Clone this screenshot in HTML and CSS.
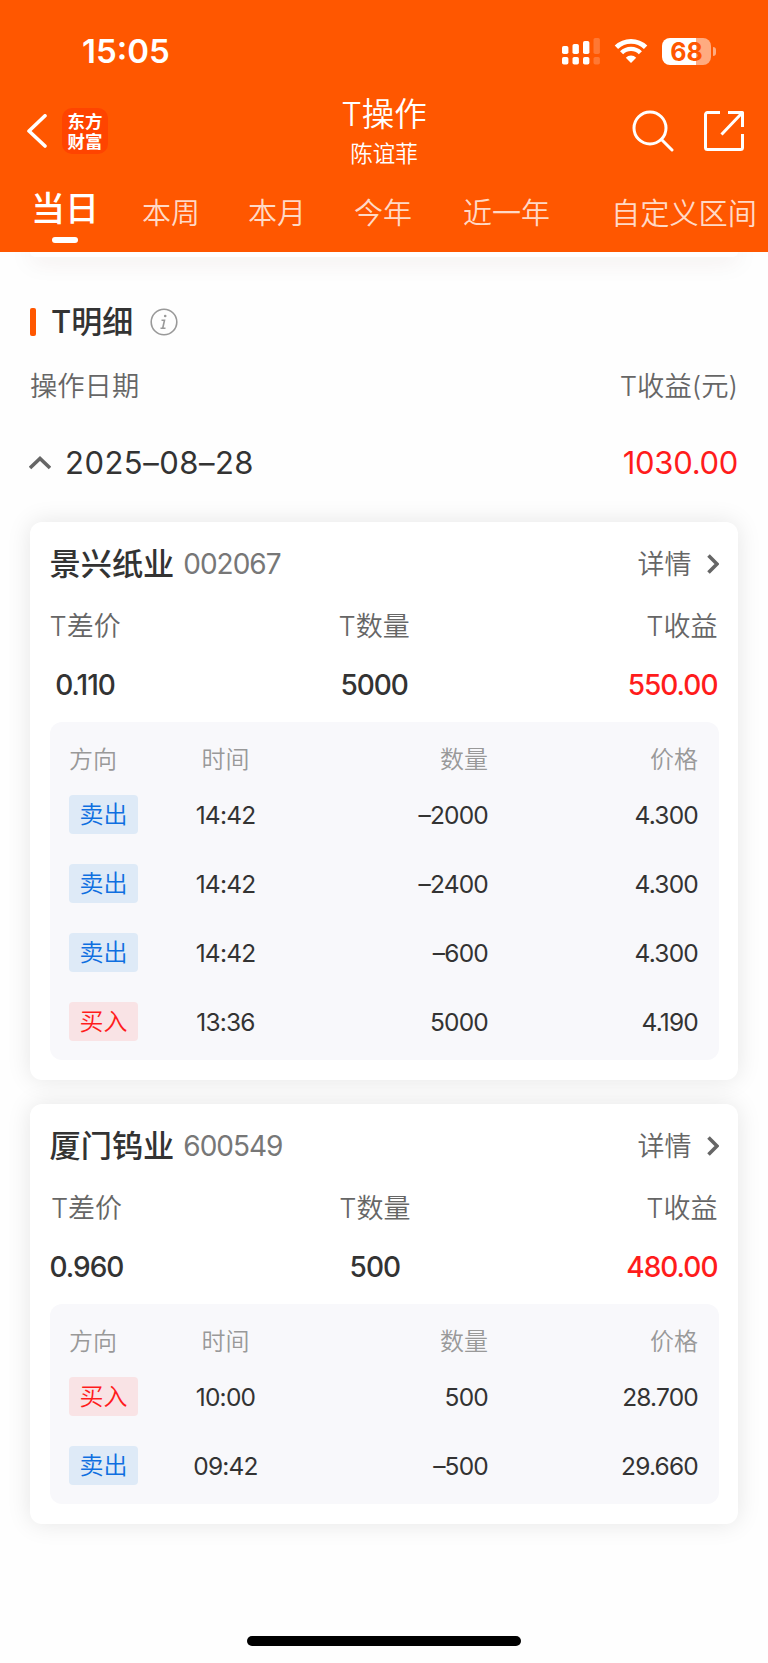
FILE: index.html
```html
<!DOCTYPE html>
<html lang="zh-CN">
<head>
  <meta charset="UTF-8">
  <meta name="viewport" content="width=device-width, initial-scale=1.0">
  <title>T操作</title>
  <link rel="stylesheet" href="styles.css">
</head>
<body>
  <header class="header">
    <div class="status-bar">
      <span class="time">15:05</span>
      <div class="status-icons">
        <svg class="signal" width="40" height="28" viewBox="0 0 40 28" fill="#fff">
          <rect x="1" y="9" width="6.4" height="8" rx="1.8"/>
          <rect x="11.5" y="7" width="6.4" height="10" rx="1.8"/>
          <rect x="22" y="4" width="6.4" height="13" rx="1.8"/>
          <rect x="32.5" y="1" width="6.4" height="16" rx="1.8" opacity=".2"/>
          <rect x="1" y="20" width="6.4" height="7.6" rx="1.8"/>
          <rect x="11.5" y="20" width="6.4" height="7.6" rx="1.8"/>
          <rect x="22" y="20" width="6.4" height="7.6" rx="1.8"/>
          <rect x="32.5" y="20" width="6.4" height="7.6" rx="1.8" opacity=".2"/>
        </svg>
        <svg class="wifi" width="34" height="26" viewBox="0 0 34 26">
          <path d="M2.4 9.2a21 21 0 0 1 29.2 0" fill="none" stroke="#fff" stroke-width="4.8"/>
          <path d="M7.6 14.8a13.2 13.2 0 0 1 18.8 0" fill="none" stroke="#fff" stroke-width="4.4"/>
          <path d="M17 25l-5.2-5.3a7.4 7.4 0 0 1 10.4 0z" fill="#fff"/>
        </svg>
        <div class="battery">68</div>
        <div class="battery-cap"></div>
      </div>
    </div>

    <div class="nav-bar">
      <div class="nav-left">
        <svg width="20" height="34" viewBox="0 0 20 34" fill="none" stroke="#fff" stroke-width="3.6" stroke-linecap="round" stroke-linejoin="round">
          <path d="M18 1.8L2 17l16 15"/>
        </svg>
        <div class="logo"><span>东方</span><span>财富</span></div>
      </div>
      <div class="nav-title">
        <h1>T操作</h1>
        <p>陈谊菲</p>
      </div>
      <div class="nav-right">
        <svg width="42" height="42" viewBox="0 0 42 42" fill="none" stroke="#fff" stroke-width="3" stroke-linecap="round">
          <circle cx="18" cy="18" r="16"/>
          <path d="M29.5 29.5L40 40"/>
        </svg>
        <svg width="42" height="42" viewBox="0 0 42 42" fill="none" stroke="#fff" stroke-width="3" stroke-linejoin="round">
          <path d="M17 2.5H4.5a2 2 0 0 0-2 2v33a2 2 0 0 0 2 2h33a2 2 0 0 0 2-2V24"/>
          <path d="M25 2.5h14.5V17M38.5 3.5l-20 21"/>
        </svg>
      </div>
    </div>

    <nav class="tabs">
      <a class="tab active">当日</a>
      <a class="tab">本周</a>
      <a class="tab">本月</a>
      <a class="tab">今年</a>
      <a class="tab year">近一年</a>
      <a class="tab custom">自定义区间</a>
    </nav>
  </header>

  <main>
    <div class="prev-card"></div>

    <div class="section-title">
      <h2>T明细</h2>
      <svg width="28" height="28" viewBox="0 0 28 28" fill="none" stroke="#999" stroke-width="1.6">
        <circle cx="14" cy="14" r="12.8"/>
        <path d="M11.5 12.3h3l-1.800 8M10.5 20.300h5"/>
        <circle cx="15.200" cy="8" r="1.3" fill="#999" stroke="none"/>
      </svg>
    </div>

    <div class="list-head">
      <span>操作日期</span>
      <span>T收益(元)</span>
    </div>

    <div class="date-row">
      <svg width="22" height="14" viewBox="0 0 22 14" fill="none" stroke="#666" stroke-width="3.6">
        <path d="M1 12L11 2.500 21 12"/>
      </svg>
      <span class="date">2025–08–28</span>
      <span class="total">1030.00</span>
    </div>

    <section class="card">
      <div class="card-head">
        <h3>景兴纸业</h3>
        <span class="code">002067</span>
        <a class="detail"><span>详情</span>
          <svg width="12" height="20" viewBox="0 0 12 20" fill="none" stroke="#666" stroke-width="3.6">
            <path d="M1.5 1.5L10 10l-8.5 8.5"/>
          </svg>
        </a>
      </div>
      <div class="stats">
        <div class="stat"><label>T差价</label><b>0.110</b></div>
        <div class="stat"><label>T数量</label><b>5000</b></div>
        <div class="stat"><label>T收益</label><b class="red">550.00</b></div>
      </div>
      <div class="trades">
        <div class="trades-head"><span>方向</span><span>时间</span><span>数量</span><span>价格</span></div>
        <div class="trade"><span class="tag sell">卖出</span><span>14:42</span><span>–2000</span><span>4.300</span></div>
        <div class="trade"><span class="tag sell">卖出</span><span>14:42</span><span>–2400</span><span>4.300</span></div>
        <div class="trade"><span class="tag sell">卖出</span><span>14:42</span><span>–600</span><span>4.300</span></div>
        <div class="trade"><span class="tag buy">买入</span><span>13:36</span><span>5000</span><span>4.190</span></div>
      </div>
    </section>

    <section class="card">
      <div class="card-head">
        <h3>厦门钨业</h3>
        <span class="code">600549</span>
        <a class="detail"><span>详情</span>
          <svg width="12" height="20" viewBox="0 0 12 20" fill="none" stroke="#666" stroke-width="3.6">
            <path d="M1.5 1.5L10 10l-8.5 8.5"/>
          </svg>
        </a>
      </div>
      <div class="stats">
        <div class="stat"><label>T差价</label><b>0.960</b></div>
        <div class="stat"><label>T数量</label><b>500</b></div>
        <div class="stat"><label>T收益</label><b class="red">480.00</b></div>
      </div>
      <div class="trades">
        <div class="trades-head"><span>方向</span><span>时间</span><span>数量</span><span>价格</span></div>
        <div class="trade"><span class="tag buy">买入</span><span>10:00</span><span>500</span><span>28.700</span></div>
        <div class="trade"><span class="tag sell">卖出</span><span>09:42</span><span>–500</span><span>29.660</span></div>
      </div>
    </section>
  </main>

  <div class="home-indicator"></div>
</body>
</html>
```
FILE: styles.css
```css
* {
  box-sizing: border-box;
  margin: 0;
  padding: 0;
}
body {
  width: 768px;
  height: 1663px;
  display: flex;
  flex-direction: column;
  overflow: hidden;
  font-family: Inter, "Noto Sans CJK SC", sans-serif;
  background: #fefefe;
  color: #333;
}
svg {
  display: block;
  flex-shrink: 0;
}

/* header */
.header {
  height: 252px;
  background: #ff5700;
  color: #fff;
  position: relative;
  z-index: 1;
}
.status-bar {
  height: 94px;
  padding: 8px 56px 0 82px;
  display: flex;
  justify-content: space-between;
  align-items: center;
}
.time {
  font-size: 33px;
  font-weight: 600;
}
.status-icons {
  display: flex;
  align-items: center;
}
.wifi {
  margin: 0 14px 0 13px;
}
.battery {
  width: 49px;
  height: 27px;
  border-radius: 8px;
  background: linear-gradient(90deg, #fff 69%, #ffab80 69%);
  color: #ff5700;
  font-size: 25px;
  font-weight: 700;
  line-height: 28px;
  text-align: center;
}
.battery-cap {
  width: 3px;
  height: 9px;
  margin: 0 -4px 0 2px;
  border-radius: 0 3px 3px 0;
  background: #ffab80;
}
.nav-bar {
  height: 80px;
  padding: 0 24px;
  display: grid;
  grid-template-columns: 1fr auto 1fr;
}
.nav-left, .nav-right {
  display: flex;
  align-items: center;
  padding-bottom: 7px;
}
.nav-left {
  padding-left: 3px;
}
.nav-right {
  justify-content: flex-end;
  gap: 29px;
  margin-right: -1px;
}
.logo {
  width: 46px;
  height: 46px;
  margin-left: 15px;
  display: flex;
  flex-direction: column;
  align-items: center;
  justify-content: center;
  border-radius: 10px;
  background: #ff4400;
  font-family: "Noto Sans CJK SC", sans-serif;
  font-size: 17.5px;
  font-weight: 700;
  line-height: 19.5px;
}
.nav-title {
  text-align: center;
}
.nav-title h1 {
  font-size: 32.5px;
  font-weight: 350;
  line-height: 41px;
}
.nav-title p {
  font-size: 22.5px;
  font-weight: 350;
  line-height: 37px;
}
.tabs {
  height: 78px;
  padding-left: 31px;
  display: flex;
  white-space: nowrap;
}
.tab {
  margin-right: 48px;
  font-size: 29px;
  font-weight: 350;
  line-height: 80px;
  color: #ffd9c6;
}
.tab.year {
  margin: 0 61px 0 3px;
}
.tab.custom {
  margin: 0;
  font-size: 29.2px;
}
.tab.active {
  margin-right: 43px;
  padding-top: 6px;
  display: flex;
  flex-direction: column;
  align-items: center;
  font-size: 34px;
  font-weight: 500;
  line-height: 57px;
  color: #fff;
}
.tab.active::after {
  content: "";
  width: 26px;
  height: 6px;
  border-radius: 3px;
  background: #fff;
}

/* bottom edge of the card scrolled under the header */
.prev-card {
  height: 5px;
  border-radius: 0 0 12px 12px;
  background: #fff;
  box-shadow: 0 0 24px rgba(80, 30, 0, .22);
}

main {
  padding: 0 30px;
}
.section-title {
  margin-top: 44px;
  height: 42px;
  display: flex;
  align-items: center;
}
.section-title::before {
  content: "";
  width: 6px;
  height: 28px;
  margin-right: 15px;
  border-radius: 2px;
  background: #ff5700;
}
.section-title h2 {
  margin-right: 17px;
  padding-bottom: 5px;
  font-size: 31px;
  font-weight: 500;
}
.list-head {
  height: 84px;
  padding-bottom: 3px;
  display: flex;
  justify-content: space-between;
  align-items: center;
  font-size: 27.3px;
  font-weight: 350;
  color: #666;
}
.date-row {
  height: 71px;
  margin-left: -1px;
  display: flex;
  align-items: center;
  font-size: 31px;
}
.date {
  margin-left: 14px;
  letter-spacing: .5px;
}
.total {
  margin-left: auto;
  letter-spacing: -.3px;
  color: #ff1c1c;
}

/* stock cards */
.card {
  margin: 24px 0;
  padding: 0 19.5px 20px;
  border-radius: 12px;
  background: #fff;
  box-shadow: 0 0 24px rgba(0, 0, 0, .1);
}
.card-head {
  height: 84px;
  display: flex;
  align-items: center;
}
.card-head h3 {
  padding-bottom: 5px;
  font-size: 31.2px;
  font-weight: 500;
}
.code {
  margin-left: 9px;
  font-size: 28px;
  letter-spacing: -1px;
  color: #777;
}
.detail {
  margin-left: auto;
  display: flex;
  align-items: center;
  gap: 15px;
  font-size: 27px;
  font-weight: 350;
  color: #666;
}
.detail span {
  padding-bottom: 3px;
}
.stats {
  height: 116px;
  padding-right: 1px;
  display: flex;
  justify-content: space-between;
}
.stat {
  display: flex;
  flex-direction: column;
  align-items: center;
}
.stat:last-child {
  align-items: flex-end;
}
.stat label {
  font-size: 27px;
  font-weight: 350;
  line-height: 41px;
  color: #666;
}
.stat b {
  font-size: 28px;
  font-weight: 500;
  line-height: 76px;
  letter-spacing: -1px;
}
.stat b.red {
  color: #ff1c1c;
}
.trades {
  padding: 14px 20.5px 4px 19.5px;
  border-radius: 12px;
  background: #f8f8fb;
}
.trades-head, .trade {
  display: grid;
  grid-template-columns: 69px 175px 175px 1fr;
  align-items: center;
  text-align: right;
}
.trades-head {
  height: 44px;
  padding-bottom: 2px;
  font-size: 24px;
  font-weight: 350;
  color: #999;
}
.trades-head span:first-child {
  text-align: left;
}
.trades-head span:nth-child(2), .trade span:nth-child(2) {
  text-align: center;
}
.trade {
  height: 69px;
  font-size: 24.5px;
  letter-spacing: -.8px;
}
.tag {
  height: 39px;
  border-radius: 4px;
  font-size: 24px;
  font-weight: 350;
  line-height: 39px;
  letter-spacing: 0;
  text-align: center;
}
.tag.sell {
  background: #deeaf7;
  color: #0f6fe0;
}
.tag.buy {
  background: #f9e3e5;
  color: #ff1c1c;
}

.home-indicator {
  width: 274px;
  height: 10px;
  margin: auto auto 17px;
  border-radius: 5px;
  background: #000;
}
```
